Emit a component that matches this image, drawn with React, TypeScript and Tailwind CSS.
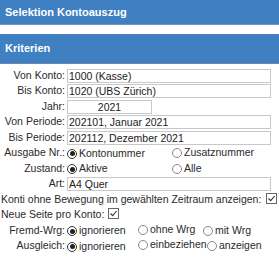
import React from "react";

const Radio = ({ checked, label }: { checked?: boolean; label: string }) => (
  <span className="inline-flex items-center">
    <span
      className={
        "w-[10px] h-[10px] rounded-full border flex items-center justify-center bg-white " +
        (checked ? "border-[#333]" : "border-[#888]")
      }
    >
      {checked && <span className="w-[5px] h-[5px] rounded-full bg-[#222]" />}
    </span>
    <span className="ml-[2px]">{label}</span>
  </span>
);

const Check = () => (
  <span className="inline-flex w-[11px] h-[11px] border border-[#666] bg-white items-center justify-center">
    <svg width="9" height="9" viewBox="0 0 9 9">
      <path d="M1.5 4.5 L3.7 6.7 L7.6 2" stroke="#333" strokeWidth="1.1" fill="none" />
    </svg>
  </span>
);

const Row = ({ label, children }: { label: string; children: React.ReactNode }) => (
  <div className="flex items-center h-[15.5px]">
    <div className="w-[65px] text-right whitespace-nowrap">{label}</div>
    <div className="ml-[2px] flex items-center flex-1 whitespace-nowrap">{children}</div>
  </div>
);

const Input = ({ value, center, w }: { value: string; center?: boolean; w?: string }) => (
  <div
    className={
      "h-[14px] border border-[#c8c8c8] bg-white flex items-center px-[1px] leading-none whitespace-nowrap text-[#1a1a1a] " +
      (center ? "justify-center " : "") +
      (w ? w : "w-[204px]")
    }
  >
    {value}
  </div>
);

export default function App() {
  return (
    <div
      className="w-[279px] h-[259px] bg-white text-[#2a2a2a] text-[10.5px] overflow-hidden"
      style={{ fontFamily: '"Liberation Sans", Arial, sans-serif' }}
    >
      <div className="h-[25px] bg-[#3f80c3] border-b border-[#7a97b8] flex items-center pl-[5px] text-white font-bold text-[11px]">
        Selektion Kontoauszug
      </div>
      <div className="h-[9px]" />
      <div className="h-[30px] bg-[#3f80c3] border-b border-[#6f87a3] flex items-center pl-[5px] text-white font-bold text-[11px]">
        Kriterien
      </div>
      <div className="pt-[4px] flex flex-col">
        <Row label="Von Konto:">
          <Input value="1000 (Kasse)" />
        </Row>
        <Row label="Bis Konto:">
          <Input value="1020 (UBS Zürich)" />
        </Row>
        <Row label="Jahr:">
          <Input value="2021" center w="w-[85px]" />
        </Row>
        <Row label="Von Periode:">
          <Input value="202101, Januar 2021" />
        </Row>
        <Row label="Bis Periode:">
          <Input value="202112, Dezember 2021" />
        </Row>
        <Row label="Ausgabe Nr.:">
          <div className="w-[105px]">
            <Radio checked label="Kontonummer" />
          </div>
          <Radio label="Zusatznummer" />
        </Row>
        <Row label="Zustand:">
          <div className="w-[105px]">
            <Radio checked label="Aktive" />
          </div>
          <Radio label="Alle" />
        </Row>
        <Row label="Art:">
          <Input value="A4 Quer" />
        </Row>
        <div className="flex items-center h-[15.5px] pl-[1px] whitespace-nowrap">
          <span>Konti ohne Bewegung im gewählten Zeitraum anzeigen:</span>
          <span className="ml-[5px]">
            <Check />
          </span>
        </div>
        <div className="flex items-center h-[15.5px] pl-[1px] whitespace-nowrap">
          <span>Neue Seite pro Konto:</span>
          <span className="ml-[4px]">
            <Check />
          </span>
        </div>
        <Row label="Fremd-Wrg:">
          <div className="w-[71px]">
            <Radio checked label="ignorieren" />
          </div>
          <div className="w-[65px]">
            <Radio label="ohne Wrg" />
          </div>
          <Radio label="mit Wrg" />
        </Row>
        <Row label="Ausgleich:">
          <div className="w-[71px]">
            <Radio checked label="ignorieren" />
          </div>
          <div className="w-[69px]">
            <Radio label="einbeziehen" />
          </div>
          <Radio label="anzeigen" />
        </Row>
      </div>
    </div>
  );
}
